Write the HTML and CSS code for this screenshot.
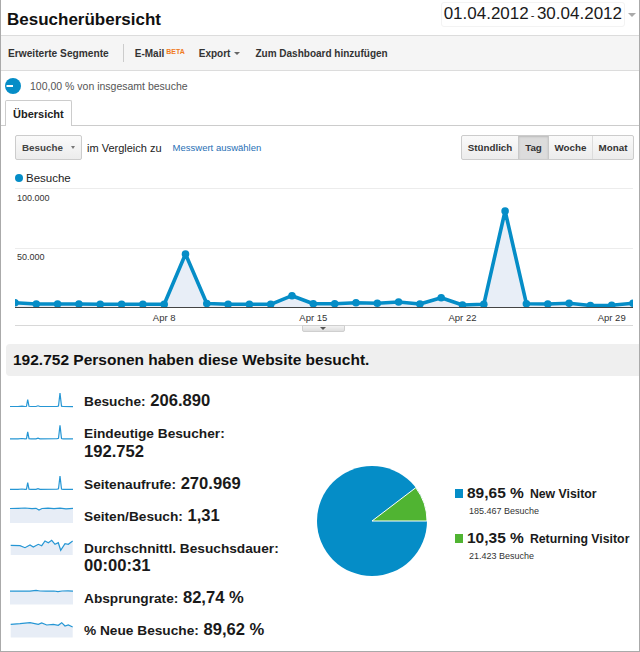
FILE: index.html
```html
<!DOCTYPE html>
<html lang="de">
<head>
<meta charset="utf-8">
<title>Besucherübersicht</title>
<link rel="stylesheet" href="styles.css">
</head>
<body>
<div class="page">
  <header class="head">
    <h1 class="title">Besucherübersicht</h1>
    <div class="range">
      <div class="date">01.04.2012<span class="dash">-</span>30.04.2012</div>
      <span class="date-arrow"></span>
    </div>
  </header>

  <nav class="toolbar">
    <span class="tb-seg">Erweiterte Segmente</span>
    <span class="tb-sep"></span>
    <span class="tb-mail">E-Mail<sup class="beta">BETA</sup></span>
    <span class="tb-export">Export</span><span class="caret"></span>
    <span class="tb-dash">Zum Dashboard hinzufügen</span>
  </nav>

  <div class="segment">
    <svg class="seg-icon" width="16" height="16" viewBox="0 0 16 16"><circle cx="8" cy="8" r="8" fill="#058dc7"/><rect x="1.5" y="7" width="6.5" height="2" fill="#fff"/></svg>
    <span class="seg-text">100,00 % von insgesamt besuche</span>
  </div>

  <div class="tabs">
    <div class="tab">Übersicht</div>
  </div>

  <div class="controls">
    <div class="metric-btn">Besuche<span class="btn-caret"></span></div>
    <span class="compare">im Vergleich zu</span>
    <span class="pick">Messwert auswählen</span>
    <div class="periods">
      <span class="p-std">Stündlich</span>
      <span class="p-tag">Tag</span>
      <span class="p-wo">Woche</span>
      <span class="p-mo">Monat</span>
    </div>
  </div>

  <div class="series"><span class="dot"></span>Besuche</div>

  <svg class="chart" width="638" height="148" viewBox="1 186 638 148">
    <defs>
      <clipPath id="plot"><rect x="15" y="186" width="618" height="122"/></clipPath>
      <linearGradient id="tabg" x1="0" y1="0" x2="0" y2="1"><stop offset="0" stop-color="#f4f4f4"/><stop offset="1" stop-color="#dcdcdc"/></linearGradient>
    </defs>
    <line x1="15" y1="188.5" x2="633" y2="188.5" stroke="#ececec"/>
    <line x1="15" y1="248.5" x2="633" y2="248.5" stroke="#ececec"/>
    <text class="ax" x="17" y="200.5">100.000</text>
    <text class="ax" x="17" y="259.5">50.000</text>
    <g clip-path="url(#plot)">
      <polygon fill="#e8eef7" points="15,302.7 36.3,304 57.6,304 78.9,304 100.2,304.3 121.6,304.3 142.9,304.3 164.2,304.3 185.5,254 206.8,303.5 228.1,304.3 249.4,304.3 270.7,304.3 292,295.7 313.3,303.7 334.7,303.7 356,302.7 377.3,303.3 398.6,302 419.9,304 441.2,297.7 462.5,305 483.8,304.3 505.1,211 526.4,303.7 547.8,304 569.1,303.3 590.4,305.5 611.7,305.3 633,303.3 633,307 15,307"/>
      <polyline fill="none" stroke="#058dc7" stroke-width="3.6" stroke-linejoin="round" points="15,302.7 36.3,304 57.6,304 78.9,304 100.2,304.3 121.6,304.3 142.9,304.3 164.2,304.3 185.5,254 206.8,303.5 228.1,304.3 249.4,304.3 270.7,304.3 292,295.7 313.3,303.7 334.7,303.7 356,302.7 377.3,303.3 398.6,302 419.9,304 441.2,297.7 462.5,305 483.8,304.3 505.1,211 526.4,303.7 547.8,304 569.1,303.3 590.4,305.5 611.7,305.3 633,303.3"/>
      <g fill="#058dc7">
        <circle cx="15" cy="302.7" r="3.8"/><circle cx="36.3" cy="304" r="3.8"/><circle cx="57.6" cy="304" r="3.8"/><circle cx="78.9" cy="304" r="3.8"/><circle cx="100.2" cy="304.3" r="3.8"/><circle cx="121.6" cy="304.3" r="3.8"/><circle cx="142.9" cy="304.3" r="3.8"/><circle cx="164.2" cy="304.3" r="3.8"/><circle cx="185.5" cy="254" r="3.8"/><circle cx="206.8" cy="303.5" r="3.8"/><circle cx="228.1" cy="304.3" r="3.8"/><circle cx="249.4" cy="304.3" r="3.8"/><circle cx="270.7" cy="304.3" r="3.8"/><circle cx="292" cy="295.7" r="3.8"/><circle cx="313.3" cy="303.7" r="3.8"/><circle cx="334.7" cy="303.7" r="3.8"/><circle cx="356" cy="302.7" r="3.8"/><circle cx="377.3" cy="303.3" r="3.8"/><circle cx="398.6" cy="302" r="3.8"/><circle cx="419.9" cy="304" r="3.8"/><circle cx="441.2" cy="297.7" r="3.8"/><circle cx="462.5" cy="305" r="3.8"/><circle cx="483.8" cy="304.3" r="3.8"/><circle cx="505.1" cy="211" r="3.8"/><circle cx="526.4" cy="303.7" r="3.8"/><circle cx="547.8" cy="304" r="3.8"/><circle cx="569.1" cy="303.3" r="3.8"/><circle cx="590.4" cy="305.5" r="3.8"/><circle cx="611.7" cy="305.3" r="3.8"/><circle cx="633" cy="303.3" r="3.8"/>
      </g>
    </g>
    <line x1="15" y1="307.5" x2="633" y2="307.5" stroke="#444"/>
    <text class="axx" x="164.2" y="320.5">Apr 8</text>
    <text class="axx" x="313.3" y="320.5">Apr 15</text>
    <text class="axx" x="462.5" y="320.5">Apr 22</text>
    <text class="axx" x="611.7" y="320.5">Apr 29</text>
    <line x1="15" y1="325.5" x2="633" y2="325.5" stroke="#d8d8d8"/>
    <path d="M302.5,325.5 H344.5 V330 Q344.5,331.5 343,331.5 H304 Q302.5,331.5 302.5,330 Z" fill="url(#tabg)" stroke="#cfcfcf"/>
    <path d="M320,327 H326 L323,330 Z" fill="#555"/>
  </svg>

  <div class="summary">192.752 Personen haben diese Website besucht.</div>

  <section class="stats">
    <div class="list">
      <div class="row">
        <svg class="spark" viewBox="0 0 63 18"><polyline points="0,15.5 8,15.5 12,15.2 15,15.5 16.5,15.3 17.7,8.5 19,15.3 21,15.5 26,15.5 28,14.8 30,15.5 47,15.4 48.5,15 50,2 51.5,15.2 53,15.5 63,15.6"/></svg>
        <div class="txt"><span class="lbl">Besuche:</span> 206.890</div>
      </div>
      <div class="row">
        <svg class="spark" viewBox="0 0 63 18"><polyline points="0,15.8 8,15.8 12,15.5 15,15.8 16.5,15.6 17.7,8.8 19,15.6 21,15.8 26,15.8 28,15.1 30,15.8 47,15.7 48.5,15.3 50,2.2 51.5,15.5 53,15.8 63,15.9"/></svg>
        <div class="txt"><span class="lbl">Eindeutige Besucher:</span><br>192.752</div>
      </div>
      <div class="row">
        <svg class="spark" viewBox="0 0 63 18"><polyline points="0,15.3 8,15.3 12,15 15,15.3 16.5,15.1 17.7,8.7 19,15.1 21,15.3 26,15.3 28,14.6 30,15.3 47,15.2 48.5,14.8 50,2 51.5,15 53,15.3 63,15.4"/></svg>
        <div class="txt"><span class="lbl">Seitenaufrufe:</span> 270.969</div>
      </div>
      <div class="row">
        <svg class="spark" viewBox="0 0 63 18"><polygon class="area" points="0,2.5 8,2.3 15,2 22,2.6 26,2.3 29,4 32,2.5 38,2.2 44,2.6 50,2.2 56,2.8 63,2.3 63,17 0,17"/><polyline points="0,2.5 8,2.3 15,2 22,2.6 26,2.3 29,4 32,2.5 38,2.2 44,2.6 50,2.2 56,2.8 63,2.3"/></svg>
        <div class="txt"><span class="lbl">Seiten/Besuch:</span> 1,31</div>
      </div>
      <div class="row">
        <svg class="spark" viewBox="0 0 63 18"><polygon class="area" points="0.7,7.3 10,7.7 15,9.7 20,7 23.3,9 28.3,6.3 31.7,7.7 35,3 38.3,4.7 41.7,2.3 45,6.3 48.3,4.7 50.7,12.3 55,5.7 58.3,6.3 62.7,3 62.7,17 0.7,17"/><polyline points="0.7,7.3 10,7.7 15,9.7 20,7 23.3,9 28.3,6.3 31.7,7.7 35,3 38.3,4.7 41.7,2.3 45,6.3 48.3,4.7 50.7,12.3 55,5.7 58.3,6.3 62.7,3"/></svg>
        <div class="txt"><span class="lbl">Durchschnittl. Besuchsdauer:</span><br>00:00:31</div>
      </div>
      <div class="row">
        <svg class="spark" viewBox="0 0 63 18"><polygon class="area" points="0,3.2 10,3 20,3.2 26,2.4 30,3 36,3.2 44,3 48,3.6 52,3 58,2.9 63,3.1 63,16.5 0,16.5"/><polyline points="0,3.2 10,3 20,3.2 26,2.4 30,3 36,3.2 44,3 48,3.6 52,3 58,2.9 63,3.1"/></svg>
        <div class="txt"><span class="lbl">Absprungrate:</span> 82,74 %</div>
      </div>
      <div class="row">
        <svg class="spark" viewBox="0 0 63 18"><polygon class="area" points="0.7,4.3 10,3.7 20,2.7 28.3,4.3 31.7,3 36.7,5 43.3,4.3 48.3,5.3 51.7,2.7 55,6 58.3,5 62.7,7 62.7,17.5 0.7,17.5"/><polyline points="0.7,4.3 10,3.7 20,2.7 28.3,4.3 31.7,3 36.7,5 43.3,4.3 48.3,5.3 51.7,2.7 55,6 58.3,5 62.7,7"/></svg>
        <div class="txt"><span class="lbl">% Neue Besuche:</span> 89,62 %</div>
      </div>
    </div>

    <svg class="pie" width="112" height="112" viewBox="0 0 112 112">
      <circle cx="56" cy="56" r="55" fill="#058dc7"/>
      <path d="M56,56 L111,56 A55,55 0 0,0 99.76,22.69 Z" fill="#50b432" stroke="#fff" stroke-width="1"/>
    </svg>

    <div class="legend">
      <div class="lg-item">
        <div class="lg-main"><span class="sq sq-blue"></span><span class="pct">89,65 %</span><span class="lg-name">New Visitor</span></div>
        <div class="lg-sub">185.467 Besuche</div>
      </div>
      <div class="lg-item">
        <div class="lg-main"><span class="sq sq-green"></span><span class="pct">10,35 %</span><span class="lg-name">Returning Visitor</span></div>
        <div class="lg-sub">21.423 Besuche</div>
      </div>
    </div>
  </section>
</div>
</body>
</html>
```

FILE: styles.css
```css
* { box-sizing: border-box; }

body {
  margin: 0;
  background: #fff;
  font-family: "Liberation Sans", Arial, sans-serif;
  color: #1a1a1a;
}

.page {
  width: 640px;
  height: 652px;
  border: 1px solid #aaa;
  border-top: none;
  overflow: hidden;
}

/* Header */
.head {
  display: flex;
  justify-content: space-between;
  height: 35px;
  padding: 0 3px 0 6px;
}
.title {
  margin: 0;
  padding-top: 10px;
  font-size: 17px;
  line-height: 20px;
  font-weight: bold;
  color: #111;
}
.range {
  display: flex;
  align-items: flex-start;
  padding-top: 2px;
}
.date {
  height: 25px;
  border: 1px solid #f3f3f3;
  border-radius: 3px;
  padding: 0 2px;
  font-size: 17px;
  line-height: 21px;
  color: #1a1a1a;
  white-space: nowrap;
}
.dash {
  font-size: 11px;
  margin: 0 2.5px 0 2px;
}
.date-arrow {
  margin: 11px 0 0 3px;
  width: 0;
  height: 0;
  border-left: 4px solid transparent;
  border-right: 4px solid transparent;
  border-top: 4px solid #aaa;
}

/* Toolbar */
.toolbar {
  display: flex;
  align-items: center;
  height: 36px;
  padding-left: 7px;
  background: #f5f5f5;
  border-top: 1px solid #dcdcdc;
  border-bottom: 1px solid #dcdcdc;
  font-size: 10px;
  font-weight: bold;
  color: #333;
  white-space: nowrap;
}
.tb-seg { font-size: 10.2px; }
.tb-sep {
  width: 1px;
  height: 18px;
  background: #ccc;
  margin-left: 14px;
}
.tb-mail { margin-left: 11px; }
.beta {
  font-size: 7px;
  color: #f07a1e;
  margin-left: 2px;
  vertical-align: 3px;
  line-height: 0;
}
.tb-export { margin-left: 14px; }
.caret {
  margin-left: 4px;
  width: 0;
  height: 0;
  border-left: 3px solid transparent;
  border-right: 3px solid transparent;
  border-top: 3px solid #666;
}
.tb-dash { margin-left: 15px; }

/* Segment */
.segment {
  display: flex;
  align-items: center;
  height: 29px;
  padding-left: 4px;
}
.seg-icon { display: block; flex: none; }
.seg-text {
  margin-left: 9px;
  font-size: 10.5px;
  color: #555;
}

/* Tabs */
.tabs {
  display: flex;
  padding-left: 4px;
  border-bottom: 1px solid #ccc;
}
.tab {
  width: 67px;
  height: 26px;
  margin-bottom: -1px;
  border: 1px solid #ccc;
  border-bottom: none;
  border-radius: 2px 2px 0 0;
  background: #fff;
  padding: 1px 0 0 7px;
  font-size: 11px;
  line-height: 24px;
  font-weight: bold;
  color: #222;
}

/* Controls */
.controls {
  display: flex;
  align-items: center;
  height: 25px;
  margin-top: 9px;
  padding: 0 5px 0 14px;
}
.metric-btn {
  display: flex;
  align-items: center;
  width: 67px;
  height: 25px;
  padding-left: 6px;
  border: 1px solid #ccc;
  border-radius: 2px;
  background: linear-gradient(#fafafa, #ececec);
  font-size: 9.8px;
  font-weight: bold;
  color: #444;
}
.btn-caret {
  margin-left: 8px;
  width: 0;
  height: 0;
  border-left: 2.5px solid transparent;
  border-right: 2.5px solid transparent;
  border-top: 3px solid #777;
}
.compare {
  margin-left: 5px;
  font-size: 11px;
  color: #222;
}
.pick {
  margin-left: 11px;
  font-size: 9.5px;
  color: #1f6fb5;
}
.periods {
  display: flex;
  margin-left: auto;
  height: 25px;
  border: 1px solid #ccc;
  border-radius: 2px;
  background: linear-gradient(#fafafa, #ececec);
}
.periods span {
  display: flex;
  align-items: center;
  justify-content: center;
  font-size: 9.8px;
  font-weight: bold;
  color: #333;
  border-left: 1px solid #dcdcdc;
}
.periods .p-std { width: 56px; border-left: none; }
.periods .p-tag {
  width: 30px;
  background: #dcdcdc;
  box-shadow: inset 0 1px 2px rgba(0, 0, 0, 0.15);
  border-left-color: #c8c8c8;
}
.periods .p-wo { width: 44px; border-left-color: #c8c8c8; }
.periods .p-mo { width: 41px; }

/* Series legend */
.series {
  display: flex;
  align-items: center;
  height: 16px;
  margin: 10px 0 0 14px;
  font-size: 11.5px;
  color: #222;
}
.dot {
  width: 8px;
  height: 8px;
  border-radius: 50%;
  background: #058dc7;
  margin-right: 3px;
}

/* Chart */
.chart { display: block; }
.ax {
  font-family: "Liberation Sans", Arial, sans-serif;
  font-size: 9px;
  fill: #333;
}
.axx {
  font-family: "Liberation Sans", Arial, sans-serif;
  font-size: 9.5px;
  fill: #333;
  text-anchor: middle;
}

/* Summary */
.summary {
  height: 32px;
  margin: 10px 0 0 5px;
  padding-left: 7px;
  background: #efefef;
  border-radius: 4px 0 0 4px;
  font-size: 15.5px;
  line-height: 32px;
  font-weight: bold;
  color: #111;
}

/* Stats */
.stats {
  display: flex;
  align-items: flex-start;
  padding-left: 9px;
}
.list {
  width: 306px;
  flex: none;
  margin-top: 16px;
  display: flex;
  flex-direction: column;
  gap: 13.5px;
}
.row {
  display: flex;
  align-items: flex-start;
}
.spark {
  display: block;
  flex: none;
  width: 63px;
  height: 18px;
  margin: -1px 11px 0 0;
}
.spark polyline {
  fill: none;
  stroke: #2596d4;
  stroke-width: 1.2;
}
.spark .area { fill: #e7edf6; }
.txt {
  font-size: 16.6px;
  line-height: 18.5px;
  font-weight: bold;
  color: #1a1a1a;
  white-space: nowrap;
}
.lbl {
  font-size: 13.7px;
  line-height: 14px;
}

.pie {
  display: block;
  flex: none;
  margin-top: 89px;
}

.legend {
  margin: 108px 0 0 27px;
  white-space: nowrap;
}
.lg-main {
  font-size: 15.5px;
  line-height: 18px;
  font-weight: bold;
  color: #1a1a1a;
}
.sq {
  display: inline-block;
  width: 8px;
  height: 9px;
  margin-right: 4px;
}
.sq-blue { background: #058dc7; }
.sq-green { background: #50b432; }
.lg-name {
  font-size: 12.3px;
  margin-left: 6px;
}
.lg-sub {
  margin-top: 1px;
  padding-left: 14px;
  font-size: 9px;
  line-height: 14px;
  color: #333;
}
.lg-item + .lg-item { margin-top: 11px; }
```
